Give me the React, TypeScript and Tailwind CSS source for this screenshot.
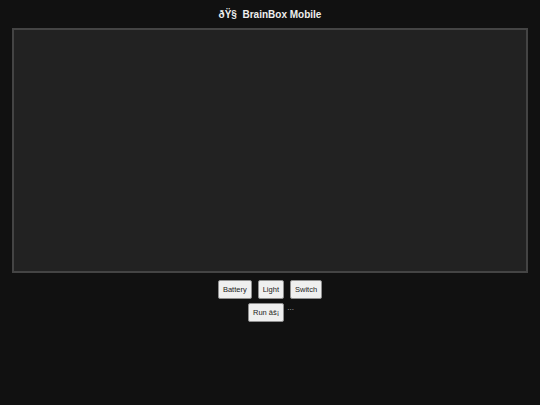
import React from 'react';

/** Toolbar button */
function Btn({ label }: { label: string }) {
  return (
    <button className="h-[19px] px-[4px] bg-[#efefef] border border-[#8f8f8f] rounded-[2px] text-[7.5px] font-normal leading-none text-[#222222]">
      {label}
    </button>
  );
}

export default function App() {
  return (
    <div className="min-h-[405px] bg-[#111111] text-white font-['Liberation_Sans',Arial,sans-serif] pt-[8px] px-[12px]">
      <h1 className="text-center text-[10px] font-bold leading-[13px] text-[#eeeeee]">
        {'ðŸ§\u00a0 BrainBox Mobile'}
      </h1>

      {/* canvas */}
      <div className="mt-[7px] h-[245px] w-[516px] bg-[#222222] border-2 border-[#444444]" />

      {/* controls */}
      <div className="mt-[7px] flex flex-col items-center gap-[4px]">
        <div className="flex gap-[6px]">
          <Btn label="Battery" />
          <Btn label="Light" />
          <Btn label="Switch" />
        </div>
        <div className="flex items-start gap-[3px] pl-[2px]">
          <Btn label="Run âš¡" />
          <span className="text-[8px] leading-[10px] text-[#bbbbbb]">...</span>
        </div>
      </div>
    </div>
  );
}
